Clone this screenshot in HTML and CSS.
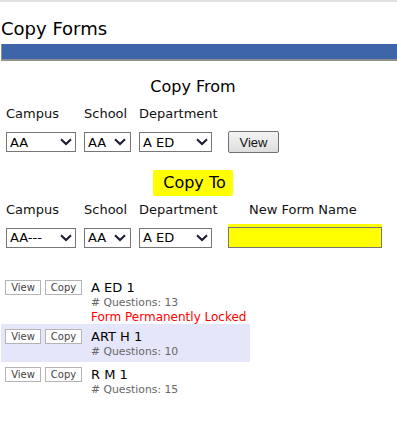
FILE: index.html
```html
<!DOCTYPE html>
<html>
<head>
<meta charset="utf-8">
<link rel="stylesheet" href="styles.css">
</head>
<body>
<div class="topline"></div>
<h1 class="page-title">Copy Forms</h1>
<div class="title-bar"></div>

<h2 class="section-title">Copy From</h2>
<div class="form-grid">
  <label class="lbl">Campus</label>
  <label class="lbl">School</label>
  <label class="lbl">Department</label>
  <span></span>
  <div class="sel sel-campus"><select><option>AA</option></select><svg class="chev" width="12" height="8" viewBox="0 0 12 8"><polyline points="1,1.2 6,6 11,1.2" fill="none" stroke="#1a1a2e" stroke-width="2"/></svg></div>
  <div class="sel sel-school"><select><option>AA</option></select><svg class="chev" width="12" height="8" viewBox="0 0 12 8"><polyline points="1,1.2 6,6 11,1.2" fill="none" stroke="#1a1a2e" stroke-width="2"/></svg></div>
  <div class="sel sel-dept"><select><option>A ED</option></select><svg class="chev" width="12" height="8" viewBox="0 0 12 8"><polyline points="1,1.2 6,6 11,1.2" fill="none" stroke="#1a1a2e" stroke-width="2"/></svg></div>
  <div><button class="btn-view">View</button></div>
</div>

<div class="section-title to-wrap"><span class="hl">Copy To</span></div>
<div class="form-grid grid-to">
  <label class="lbl">Campus</label>
  <label class="lbl">School</label>
  <label class="lbl">Department</label>
  <label class="lbl lbl-new">New Form Name</label>
  <div class="sel sel-campus"><select><option>AA---</option></select><svg class="chev" width="12" height="8" viewBox="0 0 12 8"><polyline points="1,1.2 6,6 11,1.2" fill="none" stroke="#1a1a2e" stroke-width="2"/></svg></div>
  <div class="sel sel-school"><select><option>AA</option></select><svg class="chev" width="12" height="8" viewBox="0 0 12 8"><polyline points="1,1.2 6,6 11,1.2" fill="none" stroke="#1a1a2e" stroke-width="2"/></svg></div>
  <div class="sel sel-dept"><select><option>A ED</option></select><svg class="chev" width="12" height="8" viewBox="0 0 12 8"><polyline points="1,1.2 6,6 11,1.2" fill="none" stroke="#1a1a2e" stroke-width="2"/></svg></div>
  <div><input class="new-name" type="text" value=""></div>
</div>

<div class="form-list">
  <div class="row row-first">
    <div class="row-btns"><button class="sbtn">View</button><button class="sbtn sbtn-copy">Copy</button></div>
    <div class="row-info">
      <div class="form-name">A ED 1</div>
      <div class="form-q"># Questions: 13</div>
      <div class="form-locked">Form Permanently Locked</div>
    </div>
  </div>
  <div class="row row-alt">
    <div class="row-btns"><button class="sbtn">View</button><button class="sbtn sbtn-copy">Copy</button></div>
    <div class="row-info">
      <div class="form-name">ART H 1</div>
      <div class="form-q"># Questions: 10</div>
    </div>
  </div>
  <div class="row">
    <div class="row-btns"><button class="sbtn">View</button><button class="sbtn sbtn-copy">Copy</button></div>
    <div class="row-info">
      <div class="form-name">R M 1</div>
      <div class="form-q"># Questions: 15</div>
    </div>
  </div>
</div>
</body>
</html>
```

FILE: styles.css
```css
html, body {
  margin: 0;
  padding: 0;
  background: #fff;
}
body {
  font-family: "DejaVu Sans", Verdana, sans-serif;
  color: #111;
}
.topline {
  height: 2px;
  background: #e2e2e2;
}
.page-title {
  font-size: 18px;
  line-height: 22px;
  font-weight: normal;
  margin: 16px 0 4px 1px;
  color: #000;
}
.title-bar {
  height: 15px;
  margin-left: 1px;
  background: #3f65a9;
  border-left: 1px solid #8f8f8f;
  border-bottom: 2px solid #8f8f8f;
}
.section-title {
  width: 386px;
  text-align: center;
  font-size: 16px;
  line-height: 20px;
  font-weight: normal;
  margin: 16px 0 9px 0;
  color: #000;
}
.form-grid {
  display: grid;
  grid-template-columns: 78px 55px 89px auto;
  row-gap: 9px;
  padding-left: 6px;
  align-items: center;
}
.lbl {
  font-size: 13px;
  line-height: 16px;
  color: #111;
  white-space: nowrap;
}
.lbl-new {
  padding-left: 21px;
}
.sel {
  position: relative;
  height: 20px;
}
.sel select {
  -webkit-appearance: none;
  appearance: none;
  box-sizing: border-box;
  height: 20px;
  border: 1px solid #767676;
  border-radius: 0;
  background: #fff;
  font-family: "DejaVu Sans", Verdana, sans-serif;
  font-size: 13px;
  color: #000;
  padding: 0 0 0 3px;
  margin: 0;
  display: block;
  outline: none;
}
.sel-campus select { width: 70px; }
.sel-school select { width: 47px; }
.sel-dept select { width: 73px; }
.chev {
  position: absolute;
  top: 6px;
  pointer-events: none;
}
.sel-campus .chev { left: 54px; }
.sel-school .chev { left: 30px; }
.sel-dept .chev { left: 57px; }
.btn-view {
  box-sizing: border-box;
  width: 51px;
  height: 22px;
  border: 1px solid #707070;
  border-radius: 2px;
  background: linear-gradient(#f4f4f4, #dedede);
  font-family: "Liberation Sans", Arial, sans-serif;
  font-size: 13px;
  color: #111;
  padding: 0;
  margin: 0;
}
.to-wrap {
  margin: 17px 0 6px 0;
  line-height: 20px;
}
.hl {
  display: inline-block;
  background: #ffff00;
  padding: 3px 7px 3px 10px;
  border-radius: 2px;
}
.new-name {
  box-sizing: border-box;
  width: 154px;
  height: 21px;
  border: 1px solid #777;
  background: #ffff00;
  box-shadow: 0 -3px 0 0 #ffff00;
  margin: 0;
  padding: 0;
  display: block;
}
.form-list {
  margin: 27px 0 0 1px;
  width: 249px;
}
.row {
  display: flex;
  gap: 9px;
  padding: 5px 0 2px 4px;
}
.row-first {
  padding-bottom: 0;
}
.row-alt {
  background: #e6e6fa;
  padding-bottom: 3px;
}
.row-btns {
  display: flex;
  gap: 4px;
  align-items: flex-start;
}
.sbtn {
  box-sizing: border-box;
  width: 36px;
  height: 15px;
  border: 1px solid #b4b4b4;
  background: #fff;
  font-family: "DejaVu Sans", Tahoma, sans-serif;
  font-size: 10px;
  line-height: 12px;
  color: #444;
  padding: 0;
  margin: 0;
}
.sbtn-copy {
  width: 37px;
}
.form-name {
  font-size: 13px;
  line-height: 16px;
  color: #000;
}
.form-q {
  font-size: 10.8px;
  line-height: 14px;
  color: #666;
}
.form-locked {
  font-size: 12px;
  line-height: 14px;
  color: #f00;
}
```
